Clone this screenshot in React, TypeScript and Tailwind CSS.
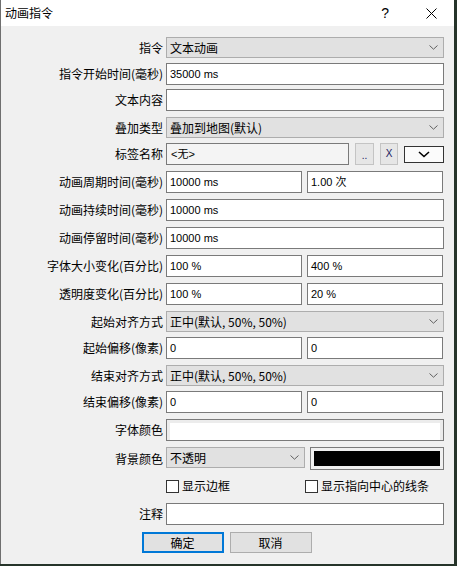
import React from "react";

const CJK = "font-['Noto_Sans_CJK_SC',sans-serif]";
const LAT = "font-['Liberation_Sans','Noto_Sans_CJK_SC',sans-serif]";

function Chevron() {
  return (
    <svg width="9" height="5" viewBox="0 0 9 5">
      <path d="M0.5 0.5 L4.5 4.2 L8.5 0.5" stroke="#606060" strokeWidth="1" fill="none" />
    </svg>
  );
}

function Label({ text }: { text: string }) {
  return (
    <div className={`w-[165px] shrink-0 pr-[3px] text-right text-[12px] leading-[16px] text-black ${CJK}`}>
      {text}
    </div>
  );
}

function Input({ value = "", w = "w-[278px]" }: { value?: string; w?: string }) {
  return (
    <div className={`${w} h-[22px] border border-[#7a7a7a] bg-white flex items-center pl-[3px] text-[11px] leading-[14px] text-black ${LAT}`}>
      {value}
    </div>
  );
}

function Combo({ value, w = "w-[278px]" }: { value: string; w?: string }) {
  return (
    <div className={`${w} h-[21px] border border-[#adadad] bg-[#e1e1e1] flex items-center justify-between pl-[3px] pr-[5px] text-[12px] leading-[16px] text-black ${CJK}`}>
      <span>{value}</span>
      <Chevron />
    </div>
  );
}

function Row({ mt, label, children }: { mt: string; label: string; children: React.ReactNode }) {
  return (
    <div className={`flex items-center ${mt}`}>
      <Label text={label} />
      {children}
    </div>
  );
}

function Pair({ a, b }: { a: string; b: string }) {
  return (
    <div className="flex gap-[5px]">
      <Input value={a} w="w-[136px]" />
      <Input value={b} w="w-[136px]" />
    </div>
  );
}

function Checkbox({ label }: { label: string }) {
  return (
    <div className="flex items-center">
      <div className="w-[13px] h-[13px] border border-[#333333] bg-white" />
      <span className={`ml-[3px] text-[12px] leading-[16px] text-black ${CJK}`}>{label}</span>
    </div>
  );
}

export default function App() {
  return (
    <div className="w-[457px] h-[566px] bg-[#26342a] overflow-hidden">
      <div className="w-[454px] h-[564px] bg-[#f0f0f0] border-l border-[#6f6f6f] flex flex-col">
        {/* title bar */}
        <div className="h-[26px] bg-white flex items-center shrink-0">
          <span className={`ml-[4px] text-[12px] leading-[16px] text-black ${CJK}`}>动画指令</span>
          <div className="flex-1" />
          <span className="text-[14px] leading-[16px] text-black font-['Liberation_Sans',sans-serif] mr-[37px]">?</span>
          <svg width="11" height="11" viewBox="0 0 11 11" className="mr-[17px]">
            <path d="M0.5 0.5 L10.5 10.5 M10.5 0.5 L0.5 10.5" stroke="#000" strokeWidth="1" />
          </svg>
        </div>

        <Row mt="mt-[11px]" label="指令">
          <Combo value="文本动画" />
        </Row>
        <Row mt="mt-[5px]" label="指令开始时间(毫秒)">
          <Input value="35000 ms" />
        </Row>
        <Row mt="mt-[4px]" label="文本内容">
          <Input />
        </Row>
        <Row mt="mt-[6px]" label="叠加类型">
          <Combo value="叠加到地图(默认)" />
        </Row>
        <Row mt="mt-[5px]" label="标签名称">
          <div className="flex items-center w-[278px]">
            <div className={`w-[183px] h-[22px] border border-[#7a7a7a] bg-[#f4f4f4] flex items-center pl-[4px] text-[11px] leading-[14px] text-black ${LAT}`}>
              &lt;无&gt;
            </div>
            <div className={`ml-[6px] w-[19px] h-[22px] border border-[#c4c4c4] bg-[#e6e6e6] flex items-end justify-center pb-[3px] text-[10px] leading-[10px] text-[#202060] ${LAT}`}>
              ..
            </div>
            <div className={`ml-[6px] w-[18px] h-[22px] border border-[#c4c4c4] bg-[#e6e6e6] flex items-center justify-center text-[10px] leading-[14px] text-[#202060] ${LAT}`}>
              X
            </div>
            <div className="ml-[6px] w-[40px] h-[17px] border border-[#333333] bg-[#fbfbfb] flex items-center justify-center">
              <svg width="12" height="7" viewBox="0 0 12 7">
                <path d="M1 1 L6 5.5 L11 1" stroke="#000" strokeWidth="1.6" fill="none" />
              </svg>
            </div>
          </div>
        </Row>
        <Row mt="mt-[6px]" label="动画周期时间(毫秒)">
          <Pair a="10000 ms" b="1.00 次" />
        </Row>
        <Row mt="mt-[6px]" label="动画持续时间(毫秒)">
          <Input value="10000 ms" />
        </Row>
        <Row mt="mt-[6px]" label="动画停留时间(毫秒)">
          <Input value="10000 ms" />
        </Row>
        <Row mt="mt-[6px]" label="字体大小变化(百分比)">
          <Pair a="100 %" b="400 %" />
        </Row>
        <Row mt="mt-[6px]" label="透明度变化(百分比)">
          <Pair a="100 %" b="20 %" />
        </Row>
        <Row mt="mt-[6px]" label="起始对齐方式">
          <Combo value="正中(默认, 50%, 50%)" />
        </Row>
        <Row mt="mt-[5px]" label="起始偏移(像素)">
          <Pair a="0" b="0" />
        </Row>
        <Row mt="mt-[6px]" label="结束对齐方式">
          <Combo value="正中(默认, 50%, 50%)" />
        </Row>
        <Row mt="mt-[5px]" label="结束偏移(像素)">
          <Pair a="0" b="0" />
        </Row>
        <Row mt="mt-[6px]" label="字体颜色">
          <div className="w-[278px] h-[22px] border border-[#7a7a7a] bg-[#ececec] p-[3px] pb-0">
            <div className="w-full h-full bg-white" />
          </div>
        </Row>
        <Row mt="mt-[6px]" label="背景颜色">
          <div className="flex w-[278px]">
            <Combo value="不透明" w="w-[139px]" />
            <div className="ml-[5px] w-[134px] h-[23px] border border-[#7a7a7a] bg-[#f0f0f0] p-[3px]">
              <div className="w-full h-full bg-black" />
            </div>
          </div>
        </Row>
        <div className="flex items-center h-[22px] mt-[5px]">
          <div className="w-[165px] shrink-0" />
          <div className="w-[139px]">
            <Checkbox label="显示边框" />
          </div>
          <Checkbox label="显示指向中心的线条" />
        </div>
        <Row mt="mt-[6px]" label="注释">
          <Input />
        </Row>
        <div className="flex justify-center gap-[6px] mt-[7px] pr-[2px]">
          <div className={`w-[82px] h-[21px] border-2 border-[#0078d7] bg-[#e1e1e1] flex items-center justify-center text-[12px] leading-[16px] text-black ${CJK}`}>
            确定
          </div>
          <div className={`w-[82px] h-[21px] border border-[#adadad] bg-[#e1e1e1] flex items-center justify-center text-[12px] leading-[16px] text-black ${CJK}`}>
            取消
          </div>
        </div>
      </div>
    </div>
  );
}
